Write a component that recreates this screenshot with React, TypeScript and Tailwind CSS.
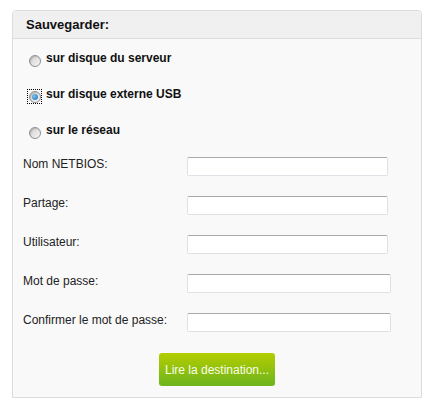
import React from "react";

const Radio = ({ checked }: { checked?: boolean }) => {
  return (
    <span className="relative mt-[14px] flex h-[13px] w-[13px] shrink-0 items-center justify-center">
      {checked && (
        <span className="absolute -inset-[1px] border border-dotted border-black"></span>
      )}
      <span className="flex h-[12px] w-[12px] items-center justify-center rounded-full border border-[#8e8f8f] bg-[linear-gradient(135deg,#cfcfcf,#f7f7f7)] shadow-[inset_1px_1px_1px_rgba(0,0,0,0.15)]">
        {checked && (
          <span className="h-[6px] w-[6px] rounded-full bg-[radial-gradient(circle_at_35%_35%,#7cc3ef,#1a6fb0)]"></span>
        )}
      </span>
    </span>
  );
};

const Field = ({ label, wide }: { label: string; wide?: boolean }) => {
  return (
    <div className="flex items-start">
      <label className="w-[174px] pl-[10px] text-[12px] leading-[14px] text-[#222]">{label}</label>
      <input
        type="text"
        className={
          "h-[19px] rounded-[2px] border border-[#dfe1e6] border-t-[#a9a9a9] bg-white " +
          (wide ? "w-[204px]" : "w-[201px]")
        }
      />
    </div>
  );
};

const App = () => {
  return (
    <div className="h-[406px] w-[434px] bg-white pl-[12px] pt-[10px] font-['Liberation_Sans',Arial,sans-serif]">
      <div className="w-[410px] rounded-t-[4px] border border-[#dcdcdc] bg-[#f9f9f9]">
        <div className="h-[28px] rounded-t-[4px] border-b border-[#dcdcdc] bg-[#f0f0f0] pl-[13px] pt-[6px] text-[13px] font-bold leading-[15px] text-[#111]">
          Sauvegarder:
        </div>
        <div className="pl-[15px] pt-[1px]">
          {[
            { t: "sur disque du serveur", c: false },
            { t: "sur disque externe USB", c: true },
            { t: "sur le réseau", c: false },
          ].map((r) => (
            <div key={r.t} className="flex h-9 items-start gap-[5px]">
              <Radio checked={r.c} />
              <span className="pt-[11px] text-[12px] font-bold leading-[14px] text-[#111]">{r.t}</span>
            </div>
          ))}
        </div>
        <div className="mt-[9px] flex flex-col gap-[20px]">
          <Field label="Nom NETBIOS:" />
          <Field label="Partage:" />
          <Field label="Utilisateur:" />
          <Field label="Mot de passe:" wide />
          <Field label="Confirmer le mot de passe:" wide />
        </div>
        <div className="flex justify-center pb-[11px] pt-[21px]">
          <button className="h-[33px] w-[116px] rounded-[3px] bg-[linear-gradient(#b4cd00,#6db41e)] text-[12px] text-[#fbfde8]">
            Lire la destination...
          </button>
        </div>
      </div>
    </div>
  );
};

export default App;
